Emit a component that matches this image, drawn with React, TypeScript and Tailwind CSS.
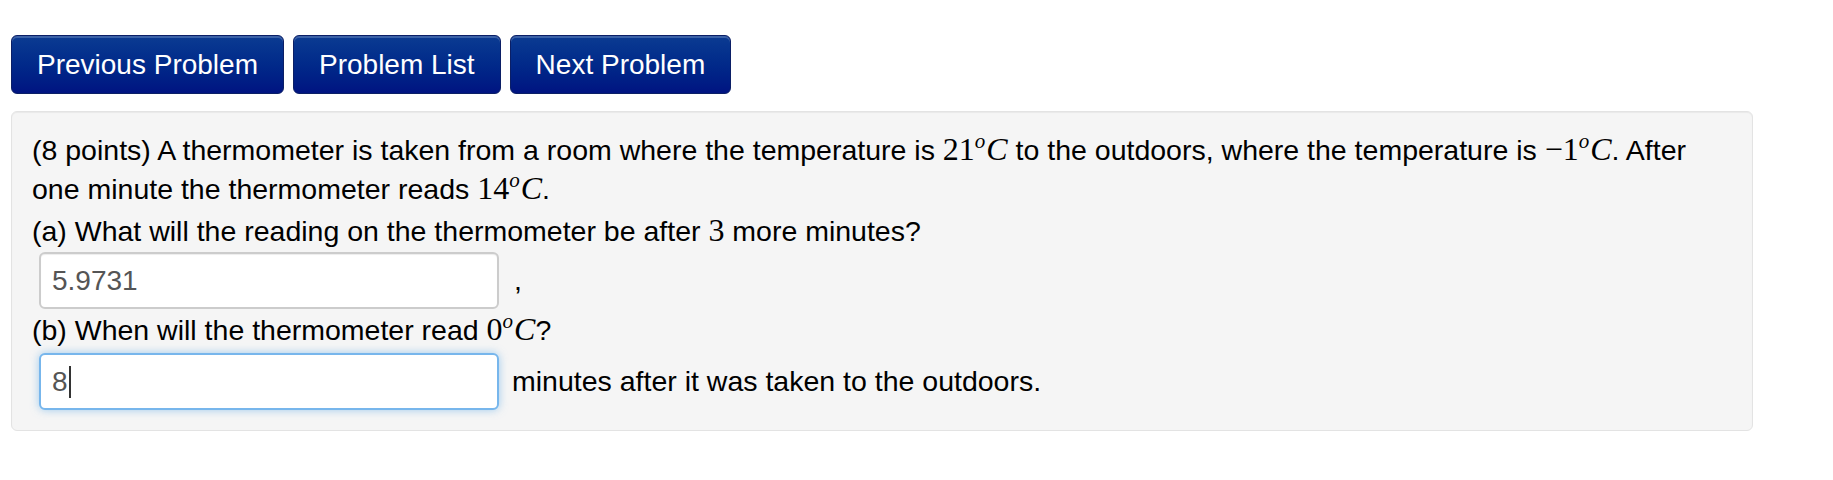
const sans = { fontFamily: '"Liberation Sans", Arial, sans-serif' };

function Deg({ num, neg }: { num: string; neg?: boolean }) {
  return (
    <span className="font-['Liberation_Serif',serif] text-[32px] leading-none">
      {neg && <span className="not-italic">−</span>}
      {num}
      <span className="italic text-[21px] leading-none align-[12px] mr-[1px]">o</span>
      <span className="italic">C</span>
    </span>
  );
}

function NavButton({ label }: { label: string }) {
  return (
    <button className="h-[59px] px-[25px] rounded-[6px] border border-[#0b1f66] bg-gradient-to-b from-[#0c3b92] to-[#001381] text-white text-[28px] shadow-[inset_0_2px_0_rgba(255,255,255,0.2)]">
      {label}
    </button>
  );
}

export default function App() {
  return (
    <div className="min-h-screen bg-white text-black" style={sans}>
      <div className="pl-[11px] pt-[35px] flex gap-[9px]">
        <NavButton label="Previous Problem" />
        <NavButton label="Problem List" />
        <NavButton label="Next Problem" />
      </div>

      <div className="ml-[11px] mt-[17px] w-[1742px] h-[320px] rounded-[6px] border border-[#e3e3e3] bg-[#f5f5f5] shadow-[inset_0_1px_1px_rgba(0,0,0,0.05)] pl-[20px] pt-[19px] text-[28.5px] leading-[37px]">
        <div className="h-[39px]">
          (8 points) A thermometer is taken from a room where the temperature is <Deg num="21" /> to the outdoors,
          where the temperature is <Deg num="1" neg />. After
        </div>
        <div className="h-[37px]">
          one minute the thermometer reads <Deg num="14" />.
        </div>
        <div className="h-[37px] mt-[6px]">
          (a) What will the reading on the thermometer be after{" "}
          <span className="font-['Liberation_Serif',serif] text-[32px] leading-none">3</span> more minutes?
        </div>

        <div className="mt-[2px] ml-[7px] flex items-center">
          <input
            readOnly
            value="5.9731"
            className="w-[460px] h-[57px] rounded-[6px] border-2 border-[#cccccc] bg-white px-[11px] text-[28px] text-[#555555] outline-none shadow-[inset_0_1px_1px_rgba(0,0,0,0.075)]"
            style={sans}
          />
          <span className="ml-[15px]">,</span>
        </div>

        <div className="h-[37px] mt-[2px]">
          (b) When will the thermometer read <Deg num="0" />?
        </div>

        <div className="mt-[5px] ml-[7px] flex items-center">
          <div className="w-[460px] h-[57px] rounded-[6px] border-2 border-[#77b6ec] bg-white px-[11px] text-[28px] text-[#555555] flex items-center shadow-[0_0_8px_rgba(102,175,233,0.6)]">
            <span>8</span>
            <span className="ml-[1px] w-[2px] h-[32px] bg-[#333333]" />
          </div>
          <span className="ml-[13px]">minutes after it was taken to the outdoors.</span>
        </div>
      </div>
    </div>
  );
}
